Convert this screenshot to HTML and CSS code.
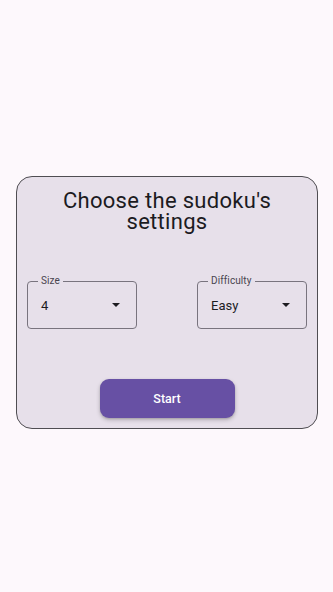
FILE: index.html
```html
<!DOCTYPE html>
<html lang="en">
<head>
<meta charset="utf-8">
<title>Sudoku settings</title>
<link rel="stylesheet" href="styles.css">
</head>
<body>
<main class="page">
  <section class="card">
    <h1 class="title">Choose the sudoku's settings</h1>
    <div class="fields">
      <div class="select">
        <span class="select-label">Size</span>
        <span class="select-value">4</span>
        <svg class="select-arrow" width="8" height="4" viewBox="0 0 8 4"><path d="M0 0h8L4 4z" fill="#1d1b20"/></svg>
      </div>
      <div class="select">
        <span class="select-label">Difficulty</span>
        <span class="select-value">Easy</span>
        <svg class="select-arrow" width="8" height="4" viewBox="0 0 8 4"><path d="M0 0h8L4 4z" fill="#1d1b20"/></svg>
      </div>
    </div>
    <div class="actions">
      <button class="start" type="button">Start</button>
    </div>
  </section>
</main>
</body>
</html>
```
FILE: styles.css
```css
html, body {
  margin: 0;
  padding: 0;
  background: #fdf8fc;
  font-family: Roboto, "Noto Sans", sans-serif;
}
.page {
  width: 333px;
  height: 592px;
  padding-top: 176px;
  padding-left: 16px;
  box-sizing: border-box;
}
.card {
  box-sizing: border-box;
  width: 302px;
  height: 253px;
  padding: 13px 10px 0;
  border: 1px solid #4f4d52;
  border-radius: 16px;
  background: #e7e0ea;
}
.title {
  margin: 0;
  font-size: 22px;
  line-height: 21px;
  font-weight: 400;
  letter-spacing: 0.3px;
  text-align: center;
  color: #1c1b1f;
  padding: 0 20px;
}
.fields {
  display: flex;
  justify-content: space-between;
  margin-top: 49px;
}
.select {
  position: relative;
  box-sizing: border-box;
  width: 110px;
  height: 48px;
  border: 1px solid #79747e;
  border-radius: 4px;
  display: flex;
  align-items: center;
  justify-content: space-between;
  padding: 0 16px 0 13px;
}
.select-label {
  position: absolute;
  top: -7px;
  left: 10px;
  padding: 0 3px;
  background: #e7e0ea;
  font-size: 10px;
  line-height: 12px;
  color: #49454f;
  letter-spacing: 0.1px;
}
.select-value {
  font-size: 13px;
  line-height: 15px;
  color: #1c1b1f;
  padding-top: 1px;
}
.select-arrow {
  display: block;
}
.actions {
  display: flex;
  justify-content: center;
  margin-top: 50px;
}
.start {
  width: 135px;
  height: 39px;
  border: none;
  border-radius: 9px;
  background: #6750a4;
  color: #ffffff;
  font-family: Roboto, "Noto Sans", sans-serif;
  font-size: 12.5px;
  font-weight: 500;
  box-shadow: 0 2px 4px rgba(0,0,0,0.22), 0 1px 2px rgba(0,0,0,0.12);
}
```
